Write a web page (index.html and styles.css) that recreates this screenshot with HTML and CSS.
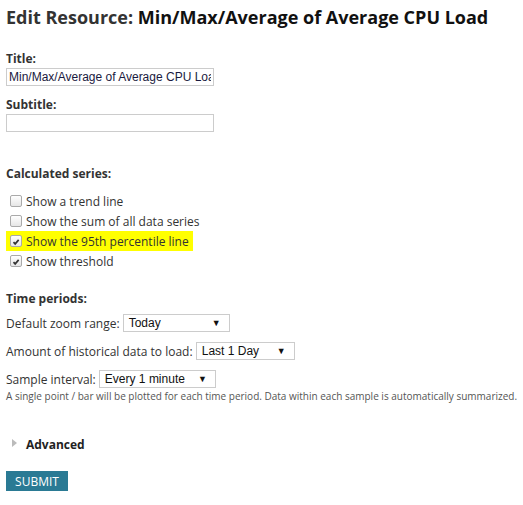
FILE: index.html
```html
<!DOCTYPE html>
<html>
<head>
<meta charset="utf-8">
<link rel="stylesheet" href="styles.css">
</head>
<body>
<div class="page">
  <h1 class="title"><span class="title-pre">Edit Resource:</span> Min/Max/Average of Average CPU Load</h1>

  <div class="field">
    <label class="label">Title:</label>
    <input class="text-input" type="text" value="Min/Max/Average of Average CPU Load">
  </div>
  <div class="field">
    <label class="label">Subtitle:</label>
    <input class="text-input" type="text" value="">
  </div>

  <div class="section">
    <div class="label">Calculated series:</div>
    <div class="checks">
      <label class="check"><span class="box"></span><span>Show a trend line</span></label>
      <label class="check"><span class="box"></span><span>Show the sum of all data series</span></label>
      <label class="check hl"><span class="box on"><svg viewBox="0 0 12 12" width="12" height="12"><path d="M3 6.2 L5 8.3 L9.2 3.4" fill="none" stroke="#333" stroke-width="2"/></svg></span><span>Show the 95th percentile line</span></label>
      <label class="check"><span class="box on"><svg viewBox="0 0 12 12" width="12" height="12"><path d="M3 6.2 L5 8.3 L9.2 3.4" fill="none" stroke="#333" stroke-width="2"/></svg></span><span>Show threshold</span></label>
    </div>
  </div>

  <div class="section2">
    <div class="label">Time periods:</div>
    <div class="row first">Default zoom range: <span class="select s1"><span>Today</span><span class="arrow">&#9660;</span></span></div>
    <div class="row">Amount of historical data to load: <span class="select s2"><span>Last 1 Day</span><span class="arrow">&#9660;</span></span></div>
    <div class="row">Sample interval: <span class="select s3"><span>Every 1 minute</span><span class="arrow">&#9660;</span></span></div>
    <div class="note">A single point / bar will be plotted for each time period. Data within each sample is automatically summarized.</div>
  </div>

  <div class="advanced"><span class="tri"></span><span>Advanced</span></div>

  <button class="submit">SUBMIT</button>
</div>
</body>
</html>
```
FILE: styles.css
```css
html, body { margin: 0; padding: 0; background: #fff; }
body { font-family: "Open Sans", sans-serif; font-size: 12px; color: #333; }
.page { padding: 5px 6px; }
.title { margin: 0; font-size: 18px; font-weight: 700; color: #111; line-height: 24px; white-space: nowrap; }
.title-pre { color: #333; }
.field { margin-top: 22px; }
.field + .field { margin-top: 11px; }
.label { display: block; font-weight: 700; color: #333; line-height: 16px; }
.text-input { display: block; box-sizing: border-box; width: 208px; height: 18px; margin: 1px 0 0; padding: 0 2px; border: 1px solid #ccc; font-family: "Liberation Sans", Arial, sans-serif; font-size: 12px; color: #1a1a40; outline: none; }
.section { margin-top: 34px; }
.checks { margin-top: 9px; display: flex; flex-direction: column; }
.check { display: flex; align-items: center; height: 20px; gap: 4px; padding-left: 4px; width: fit-content; padding-right: 4px; }
.check.hl { background: #ffff00; }
.box { width: 12px; height: 12px; box-sizing: border-box; border: 1px solid #aaa; border-radius: 2px; background: linear-gradient(#fff, #e6e6e6); display: flex; }
.box svg { display: block; }
.section2 { margin-top: 20px; }
.row { display: flex; align-items: center; height: 18px; margin-top: 10px; white-space: pre; }
.row.first { margin-top: 7px; }
.select { display: inline-flex; justify-content: space-between; align-items: center; box-sizing: border-box; height: 18px; padding: 0 8px 0 5px; border: 1px solid #ccc; font-family: "Liberation Sans", Arial, sans-serif; font-size: 12px; color: #111; }
.s1 { width: 107px; }
.s2 { width: 99px; }
.s3 { width: 117px; }
.arrow { font-size: 9px; color: #111; }
.note { font-size: 10px; color: #555; line-height: 14px; margin-top: 1px; white-space: nowrap; }
.advanced { display: flex; align-items: center; gap: 9px; margin-top: 33px; padding-left: 6px; font-weight: 700; font-size: 12px; color: #222; }
.tri { width: 0; height: 0; border-top: 4px solid transparent; border-bottom: 4px solid transparent; border-left: 5px solid #bbb; margin-top: -4px; }
.submit { display: block; margin-top: 18px; width: 62px; height: 20px; padding: 0; border: 0; background: #2a7a94; color: #fff; font-family: "Open Sans", sans-serif; font-size: 12px; }
```
